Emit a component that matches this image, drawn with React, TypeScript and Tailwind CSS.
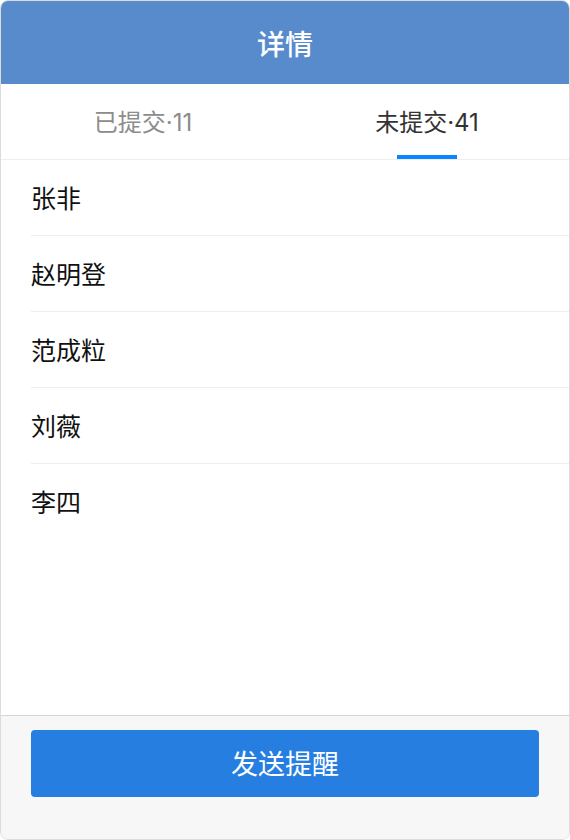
import * as React from "react";

const names = ["张非", "赵明登", "范成粒", "刘薇", "李四"];

const tabs = [
  { label: "已提交", count: 11 },
  { label: "未提交", count: 41 },
];

export default function App() {
  const [tab, setTab] = React.useState(1);

  return (
    <div
      className="w-[570px] h-[840px] flex flex-col overflow-hidden rounded-[8px] border border-[#dcdcdc] bg-white"
      style={{ fontFamily: '"Noto Sans CJK SC", "Noto Sans", sans-serif' }}
    >
      {/* header */}
      <div className="h-[83px] shrink-0 bg-[#578bcc] flex items-center justify-center">
        <span className="text-[28px] font-medium text-white">详情</span>
      </div>

      {/* tabs */}
      <div className="h-[76px] shrink-0 flex border-b border-[#eeeeee]">
        {tabs.map((t, i) => (
          <button
            key={t.label}
            onClick={() => setTab(i)}
            className="flex-1 relative flex items-center justify-center"
          >
            <span
              className={
                i === tab
                  ? "text-[24px] text-[#333333]"
                  : "text-[24px] text-[#8c8c8c]"
              }
            >
              {t.label}
              <span className="font-[Inter,sans-serif]">·{t.count}</span>
            </span>
            {i === tab && (
              <span className="absolute bottom-0 left-1/2 -translate-x-1/2 w-[60px] h-[4px] bg-[#0a84ff]" />
            )}
          </button>
        ))}
      </div>

      {/* list */}
      <div className="flex-1 pl-[30px]">
        {names.map((n, i) => (
          <div
            key={n}
            className={
              i < names.length - 1
                ? "h-[76px] flex items-center border-b border-[#eeeeee]"
                : "h-[76px] flex items-center"
            }
          >
            <span className="text-[25px] text-[#111111]">{n}</span>
          </div>
        ))}
      </div>

      {/* footer */}
      <div className="h-[124px] shrink-0 border-t border-[#d4d4d4] bg-[#f7f7f7] px-[30px] pt-[14px]">
        <button className="w-full h-[67px] rounded-[4px] bg-[#267ee0] text-white text-[27px]">
          发送提醒
        </button>
      </div>
    </div>
  );
}
